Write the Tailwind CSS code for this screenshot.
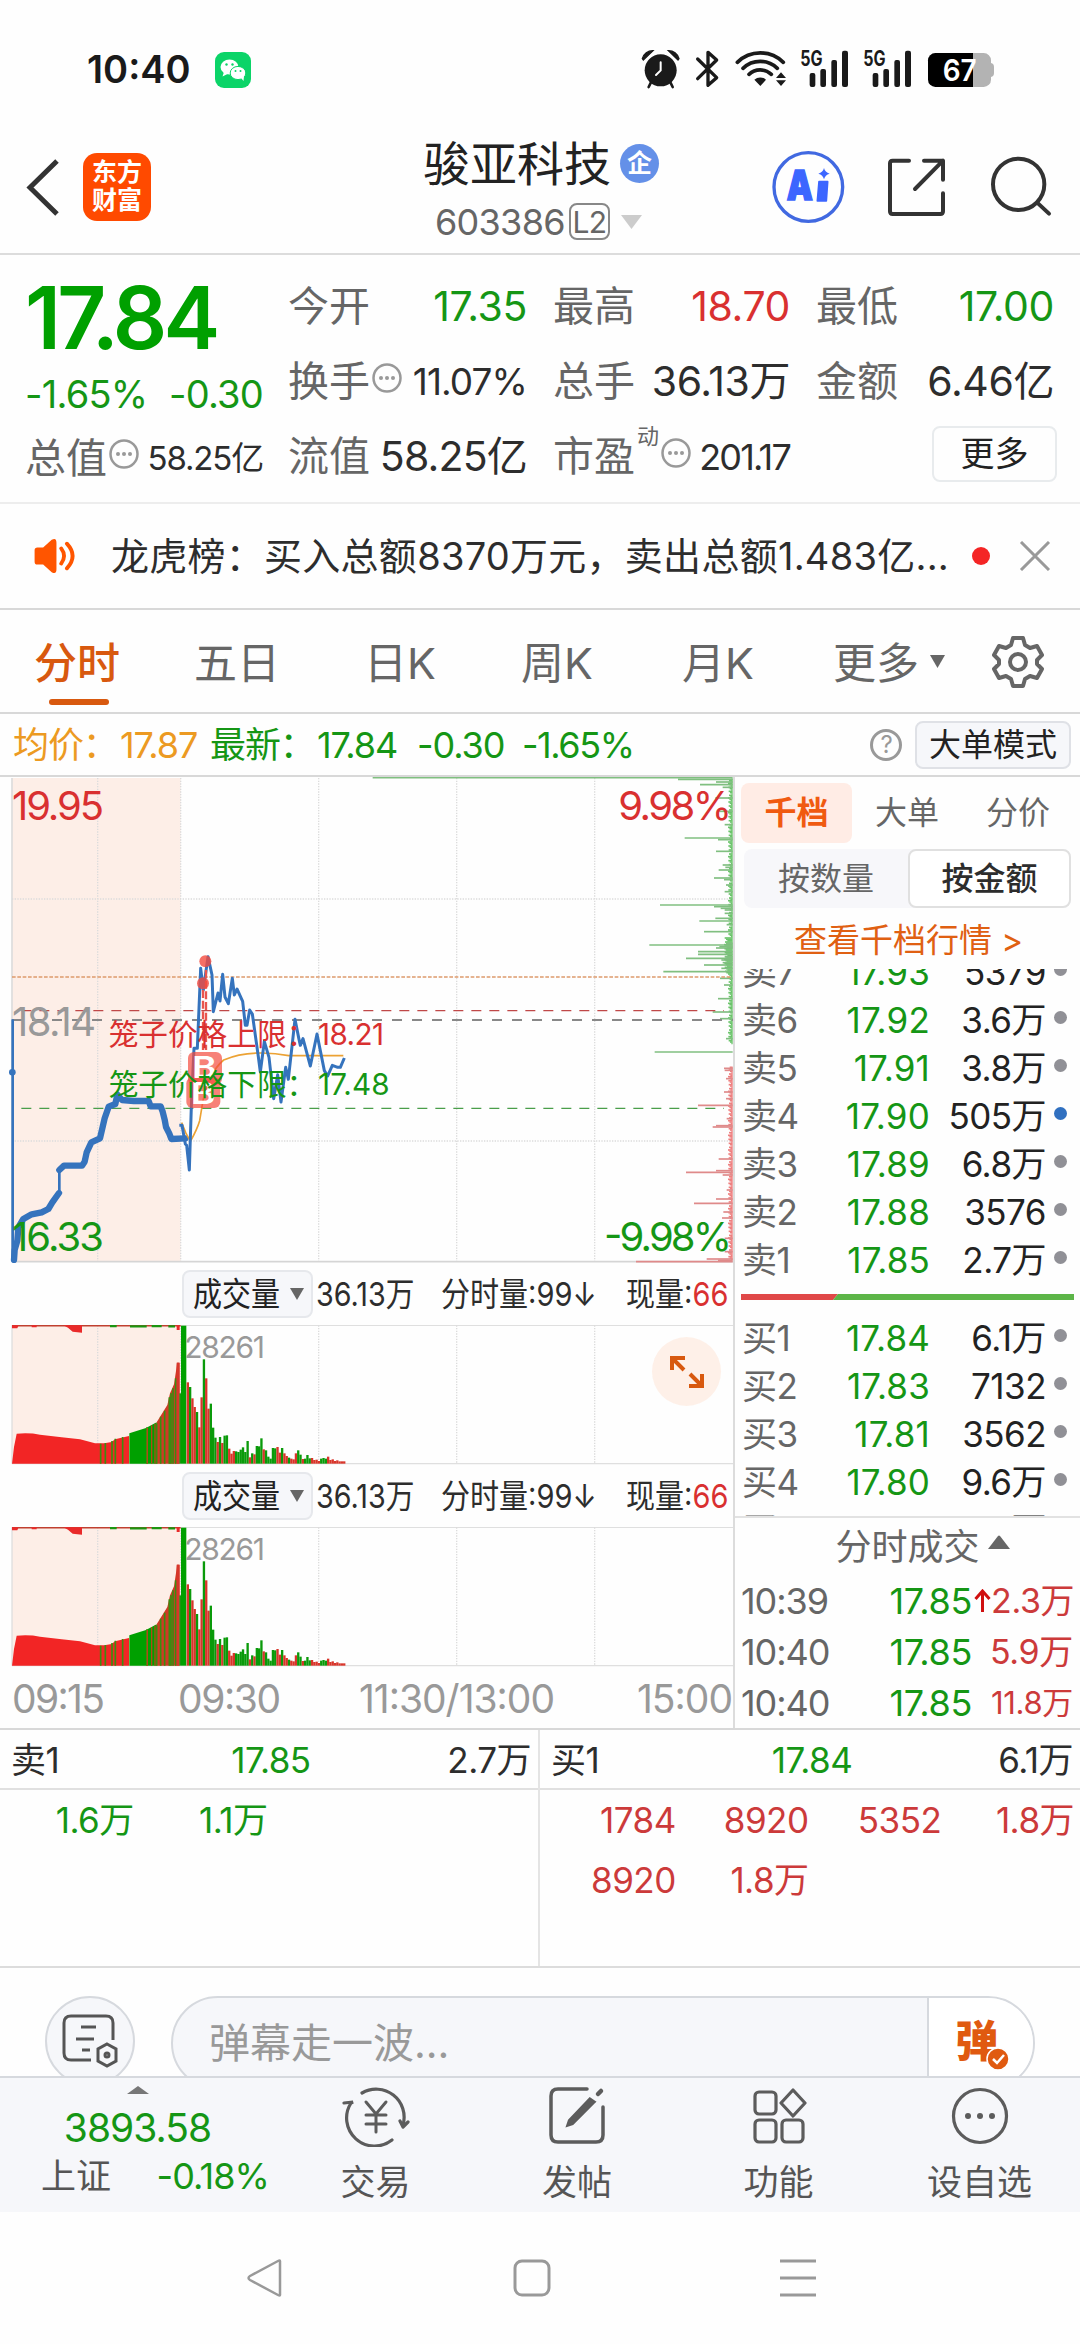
<!DOCTYPE html>
<html lang="zh-CN">
  <head>
    <meta charset="UTF-8" />
    <meta name="viewport" content="width=device-width, initial-scale=1.0" />
    <title>骏亚科技 603386</title>
    <script src="https://cdn.jsdelivr.net/npm/@tailwindcss/browser@4"></script>
    <style>
      body {
        font-family: 'Inter', 'Noto Sans CJK SC', sans-serif;
      }
    </style>
  </head>
  <body class="w-[1080px] h-[2344px] overflow-hidden bg-[#fefefe] text-[#2d2d2d] leading-none whitespace-nowrap">

    <!-- status bar -->
    <div class="h-[138px] pt-[49px] pl-[87px] flex items-start">
      <span class="w-[128px] h-10 flex items-center text-[38px] font-semibold text-[#1a1a1a] tracking-normal">10:40</span>
      <svg class="mt-[3px]" width="36" height="36" viewBox="0 0 36 36">
        <rect width="36" height="36" rx="9" fill="#0bd468" />
        <ellipse cx="14.5" cy="15" rx="9" ry="7.6" fill="#fff" />
        <path d="M9 20l-1.500 4.500 5-2.500z" fill="#fff" />
        <ellipse cx="23" cy="21" rx="7.800" ry="6.600" fill="#fff" stroke="#0bd468" stroke-width="1" />
        <path d="M26 26l2.500 3 .5-5z" fill="#fff" />
        <g fill="#0bd468"><circle cx="11.500" cy="12.500" r="1.200" /><circle cx="17.500" cy="12.500" r="1.200" /><circle cx="20.500" cy="19" r="1" /><circle cx="25.500" cy="19" r="1" /></g>
      </svg>
      <svg class="ml-[369px] -mt-[19px]" width="460" height="80" viewBox="0 0 1380 240" fill="#1a1a1a">
        <g>
          <circle cx="122" cy="121" r="48" />
          <path d="M67 86a32 32 0 0 1 32-24L70 90zM177 86a32 32 0 0 0-32-24l29 28z" stroke="#1a1a1a" stroke-width="4" />
          <path d="M94 155l-8 16M150 155l8 16" stroke="#1a1a1a" stroke-width="8" stroke-linecap="round" />
          <path d="M122 97v24l-14 14" fill="none" stroke="#fff" stroke-width="6" stroke-linecap="round" />
        </g>
        <path d="M233 87l57 56-26 23V67l26 23-57 56" fill="none" stroke="#1a1a1a" stroke-width="10" stroke-linecap="round" stroke-linejoin="round" />
        <g fill="none" stroke="#1a1a1a" stroke-width="11" stroke-linecap="round">
          <path d="M352 97a98 98 0 0 1 138 0M369 115a74 74 0 0 1 103 0M387 133a49 49 0 0 1 67 0" />
        </g>
        <path d="M403 149a26 26 0 0 1 35 0l-17 19zM468 144l15-17 15 17zM468 151l15 17 15-17z" />
        <text x="541" y="107" font-size="63" font-weight="700" textLength="67" lengthAdjust="spacingAndGlyphs">5G</text>
        <g><rect x="569" y="129" width="17" height="42" rx="6" /><rect x="601" y="117" width="17" height="54" rx="6" /><rect x="634" y="90" width="17" height="81" rx="6" /><rect x="666" y="62" width="18" height="109" rx="6" /></g>
        <text x="730" y="107" font-size="63" font-weight="700" textLength="67" lengthAdjust="spacingAndGlyphs">5G</text>
        <g><rect x="758" y="129" width="17" height="42" rx="6" /><rect x="790" y="117" width="17" height="54" rx="6" /><rect x="823" y="90" width="17" height="81" rx="6" /><rect x="855" y="62" width="18" height="109" rx="6" /></g>
        <path d="M1059 69h32a22 22 0 0 1 22 22v8q9 2 9 12v18q0 10-9 12v8a22 22 0 0 1-22 22h-32z" fill="#b3b3b3" />
        <path d="M1059 69v102H946a22 22 0 0 1-22-22V91a22 22 0 0 1 22-22z" fill="#000" />
        <text x="968" y="154" font-size="90" font-weight="600" fill="#fff" textLength="102" lengthAdjust="spacingAndGlyphs">67</text>
      </svg>
    </div>

    <!-- header -->
    <header class="h-[117px] flex border-b-2 border-[#dcdcdc]">
      <svg class="ml-6 mt-5" width="40" height="60" viewBox="0 0 40 60" fill="none" stroke="#333" stroke-width="5"><path d="M33 3L6 29.500 33 56" /></svg>
      <div class="ml-[19px] mt-[15px] w-[68px] h-[68px] rounded-[14px] bg-[#ff4a00] text-white text-[25px] leading-[28px] font-bold text-center pt-[5px]">东方<br />财富</div>
      <div class="ml-[272px]">
        <div class="flex items-center h-[50px]">
          <span class="text-[47px] text-[#222]">骏亚科技</span>
          <span class="ml-[9px] w-[39px] h-[39px] rounded-full bg-[#6490e8] text-white text-[25px] font-bold flex items-center justify-center">企</span>
        </div>
        <div class="flex items-center mt-[15px] ml-3 text-[36px] text-[#666] tracking-[-0.02em]">
          <span class="w-[129px]">603386</span>
          <span class="ml-[5px] w-[41px] h-[37px] rounded-lg border-2 border-[#888] text-[30px] flex items-center justify-center">L2</span>
          <svg class="ml-[10px]" width="23" height="16" viewBox="0 0 23 16"><path d="M1 1h21L11.500 15z" fill="#ccc" /></svg>
        </div>
      </div>
      <svg class="ml-auto mt-3" width="310" height="76" viewBox="0 0 930 228" fill="none">
        <!-- ai assistant, share, search -->
        <circle cx="115" cy="111" r="103" stroke="#4169e1" stroke-width="10" />
        <text x="50" y="150" font-size="124" font-weight="900" fill="#3c66ff" stroke="#3c66ff" stroke-width="5" textLength="78" lengthAdjust="spacingAndGlyphs">A</text>
        <path d="M147 95h26l-4 58h-27z" fill="#3c66ff" stroke="#3c66ff" stroke-width="5" stroke-linejoin="round" />
        <path d="M162 54q3 13 17 17-14 4-17 17-3-13-17-17 14-4 17-17z" fill="#3c66ff" />
        <g stroke="#333" stroke-width="12" stroke-linecap="round" stroke-linejoin="round">
          <path d="M417 32h-49q-8 0-8 8v144q0 8 8 8h143q8 0 8-8v-54M462 32h57v57M519 32l-84 85" />
          <circle cx="746" cy="103" r="77" />
          <path d="M804 160l33 31" />
        </g>
      </svg>
    </header>

    <!-- quote -->
    <section class="h-[249px] border-b-2 border-[#ededed] flex text-[41px] text-[#666]">
      <div class="w-[263px] pl-[25px] shrink-0">
        <div class="mt-[20px] h-[86px] flex items-center text-[86px] font-semibold text-[#00a000] tracking-[-0.045em] origin-left scale-x-[.99]">17.84</div>
        <div class="mt-[13px] h-[40px] flex items-center justify-between text-[38px] text-[#159615] tracking-[-0.02em]"><span>-1.65%</span><span>-0.30</span></div>
        <div class="mt-[24px] h-[40px] flex items-center justify-between">
          <span class="flex items-center">总值<svg class="ml-[2px] -mt-2" width="30" height="30" viewBox="0 0 30 30" fill="#999"><circle cx="15" cy="15" r="13.500" fill="none" stroke="#999" stroke-width="2.500" /><circle cx="9" cy="15" r="2" /><circle cx="15" cy="15" r="2" /><circle cx="21" cy="15" r="2" /></svg></span>
          <span class="text-[33px] text-[#2d2d2d] tracking-[-0.035em]">58.25亿</span>
        </div>
      </div>
      <div class="mt-[14px] ml-[25px] grid grid-cols-[239px_237px_238px] grid-rows-[75px_75px_75px] gap-x-[26px] [&>div]:flex [&>div]:items-center [&>div]:justify-between h-[225px]">
        <div>今开<span class="text-[#159615] tracking-[-0.01em]">17.35</span></div>
        <div>最高<span class="text-[#d93030] tracking-[-0.01em]">18.70</span></div>
        <div>最低<span class="text-[#159615] tracking-[-0.01em]">17.00</span></div>
        <div>
          <span class="flex items-center">换手<svg class="ml-[2px] -mt-2" width="30" height="30" viewBox="0 0 30 30" fill="#999"><circle cx="15" cy="15" r="13.500" fill="none" stroke="#999" stroke-width="2.500" /><circle cx="9" cy="15" r="2" /><circle cx="15" cy="15" r="2" /><circle cx="21" cy="15" r="2" /></svg></span>
          <span class="text-[37px] text-[#2d2d2d] tracking-[-0.025em]">11.07%</span>
        </div>
        <div>总手<span class="text-[#2d2d2d] tracking-[-0.01em]">36.13万</span></div>
        <div>金额<span class="text-[#2d2d2d] tracking-[-0.01em]">6.46亿</span></div>
        <div>流值<span class="text-[#2d2d2d] tracking-[-0.02em]">58.25亿</span></div>
        <div>
          <span class="flex items-center">市盈<sup class="text-[22px] -mt-5 ml-[2px]">动</sup><svg class="ml-[2px] -mt-2" width="30" height="30" viewBox="0 0 30 30" fill="#999"><circle cx="15" cy="15" r="13.500" fill="none" stroke="#999" stroke-width="2.500" /><circle cx="9" cy="15" r="2" /><circle cx="15" cy="15" r="2" /><circle cx="21" cy="15" r="2" /></svg></span>
          <span class="text-[36px] text-[#2d2d2d] tracking-[-0.05em]">201.17</span>
        </div>
        <div><span class="ml-auto -mr-[3px] -mt-[5px] w-[125px] h-[56px] rounded-lg border-2 border-[#e8ebed] text-[34px] text-[#222] flex items-center justify-center">更多</span></div>
      </div>
    </section>

    <!-- news ticker -->
    <section class="h-[106px] border-b-2 border-[#d8d8d8] flex items-center">
      <svg class="ml-[32px]" width="47" height="38" viewBox="0 0 48 40">
        <path d="M2 14q0-3 3-3h6L20 3q5-3 5 3v28q0 6-5 3l-9-8H5q-3 0-3-3z" fill="#ff5500" />
        <path d="M30 12q6 8 0 16M36 7q12 13 0 26" fill="none" stroke="#ff5500" stroke-width="4" stroke-linecap="round" />
      </svg>
      <span class="ml-[32px] w-[850px] text-[38px] text-[#2d2d2d] tracking-[0.007em]">龙虎榜：买入总额8370万元，卖出总额1.483亿...</span>
      <span class="ml-[11px] w-[18px] h-[18px] rounded-full bg-[#f42525]"></span>
      <svg class="ml-[29px]" width="32" height="30" viewBox="0 0 32 30" stroke="#999" stroke-width="3"><path d="M2 1l28 28M30 1L2 29" /></svg>
    </section>

    <!-- period tabs -->
    <nav class="h-[104px] border-b-2 border-[#d8d8d8] flex text-[43px] text-[#666] pt-[32px] pl-[34px]">
      <div class="w-[160px] text-[#d8590f] font-medium">分时<div class="mt-[14px] ml-[15px] w-[60px] h-[6px] rounded-full bg-[#d8590f]"></div></div>
      <div class="w-[170px]">五日</div>
      <div class="w-[157px]">日K</div>
      <div class="w-[161px]">周K</div>
      <div class="w-[151px]">月K</div>
      <div class="w-[159px] flex items-start">更多<svg class="ml-[10px] mt-[12px]" width="17" height="15" viewBox="0 0 17 15"><path d="M1 1h15L8.500 14z" fill="#666" /></svg></div>
      <svg class="-mt-[7px]" width="52" height="54" viewBox="0 0 52 54" fill="none" stroke="#666" stroke-width="4" stroke-linejoin="round">
        <path d="M21 3h10l2 7 5 3 7-2 5 9-5 5v4l5 5-5 9-7-2-5 3-2 7H21l-2-7-5-3-7 2-5-9 5-5v-4l-5-5 5-9 7 2 5-3z" />
        <circle cx="26" cy="27" r="8" />
      </svg>
    </nav>

    <!-- price summary -->
    <div class="h-[63px] border-b-2 border-[#d8d8d8] flex items-center text-[36px] tracking-[-0.03em] text-[#159615]">
      <span class="ml-[13px] w-[107px] text-[#ec9a22]">均价：</span>
      <span class="w-[90px] text-[#ec9a22]">17.87</span>
      <span class="w-[107px]">最新：</span>
      <span class="w-[100px]">17.84</span>
      <span class="w-[105px]">-0.30</span>
      <span class="tracking-[-0.04em]">-1.65%</span>
      <span class="ml-auto w-[32px] h-[32px] rounded-full border-[3px] border-[#999] text-[24px] text-[#999] flex items-center justify-center">?</span>
      <span class="ml-[13px] mr-[9px] w-[156px] h-[48px] rounded-lg border-2 border-[#dfe1e6] bg-[#f6f7fa] text-[32px] text-[#222] tracking-normal flex items-center justify-center">大单模式</span>
    </div>

    <div class="h-[953px] flex border-b-2 border-[#d8d8d8]">
      <!-- charts -->
      <div class="w-[735px] border-r-2 border-[#dcdcdc]">
        <svg class="block" width="733" height="486" viewBox="0 21 2199 1458" fill="none">
          <rect x="36" y="24" width="506" height="1450" fill="#fdeee7" />
          <path d="M36 24v1450" stroke="#dcdcdc" stroke-width="5" />
          <g stroke="#dcdcdc" stroke-width="4" stroke-dasharray="4 4">
            <path d="M293 24v1450M542 24v1450M956 24v1450M1370 24v1450M1784 24v1450M36 387h2163M36 1113h2163" />
          </g>
          <path d="M36 1475h2163" stroke="#d5d5d5" stroke-width="5" />
          <g id="depth" stroke-width="5"></g>
          <path d="M36 621h2155" stroke="#dd9a6c" stroke-width="5" stroke-dasharray="11 5" />
          <path d="M64 722h2108" stroke="#c04848" stroke-width="4" stroke-dasharray="30 24" />
          <path d="M36 750h2163" stroke="#888" stroke-width="6" stroke-dasharray="30 30" />
          <path d="M64 1015h2108" stroke="#4a9e4a" stroke-width="4" stroke-dasharray="30 24" />
          <text x="36" y="797" font-size="120" fill="#999" textLength="252">18.14</text>
          <path d="M38 748V1470" stroke="#3573bd" stroke-width="8" />
          <circle cx="37" cy="907" r="10" fill="#3573bd" />
          <path d="M42 1470l2-30 8-28 3-40 15-25 25-14 30-6 20-10 12-20 20-28M178 1200l14-13h54l8-12 6-28 14-30 26-12 6-26 8-34 12-35 20-8 6-28 14 16 36 3h44l6 16h30l6 16 6 24 4 22 10 20 6 16 42-2" stroke="#3573bd" stroke-width="19" stroke-linejoin="round" stroke-linecap="round" />
          <path d="M178 1265V1200" stroke="#3573bd" stroke-width="8" />
          <path d="M545 1058l12 30 14 26q20-35 28-62l10-60q18-85 62-122 50-22 115-21 40 0 80 8h164" stroke="#eca234" stroke-width="5" />
          <path d="M538 1066h8l10 56 4 4 8 74 6-190 8-175h10l10-240 8 65 14-100 12 55 4 110 14-56 6 24 8-80 7 68 10 20 12-76 6 50 8-18 17 37 8 72h5l8-46 8 12 18 128 6 46 12-92 14 48 8 70 6 54 12-72 10 82 14-104 8 36 20-180 12 60 4 18 8-20 22 82 20-96 22 110 10 16 14-32 16 6h8l12-28" stroke="#3573bd" stroke-width="9" stroke-linejoin="round" />
          <path d="M609 660v180M618 600v240" stroke="#e8554e" stroke-width="7" stroke-dasharray="24 8" />
          <g fill="#f44b3f" fill-opacity=".8">
            <circle cx="616" cy="574" r="18" /><circle cx="609" cy="640" r="18" />
            <rect x="564" y="846" width="102" height="98" rx="18" fill-opacity=".7" />
            <rect x="559" y="922" width="102" height="92" rx="18" fill-opacity=".7" />
          </g>
          <text x="576" y="925" font-size="88" font-weight="600" fill="#fff" textLength="74" lengthAdjust="spacingAndGlyphs">B</text>
          <text x="572" y="1002" font-size="88" font-weight="600" fill="#fff" textLength="74" lengthAdjust="spacingAndGlyphs">B</text>
          <g font-size="89">
            <text x="326" y="825" fill="#d93030">笼子价格上限：</text>
            <text x="954" y="825" fill="#d93030" textLength="198">18.21</text>
            <text x="326" y="975" fill="#159615">笼子价格下限：</text>
            <text x="954" y="975" fill="#159615" textLength="215">17.48</text>
          </g>
          <g font-size="120">
            <text x="36" y="149" fill="#d93030" textLength="276">19.95</text>
            <text x="36" y="1444" fill="#159615" textLength="276">16.33</text>
            <text x="1855" y="149" fill="#d93030" textLength="341">9.98%</text>
            <text x="1812" y="1444" fill="#159615" textLength="384">-9.98%</text>
          </g>
        </svg>

        <div class="h-[62px] flex items-center pl-[182px] text-[33px]">
          <span class="shrink-0 w-[131px] h-[48px] rounded-lg border-2 border-[#e6e8ec] bg-[#f6f7fa] flex items-center pl-[9px] text-[#222]"><span class="w-[87px] origin-left scale-x-[.88]">成交量</span><svg class="ml-[9px]" width="16" height="14" viewBox="0 0 16 14"><path d="M1 1h14L8 13z" fill="#666" /></svg></span>
          <span class="shrink-0 ml-[3px] w-[125px] origin-left scale-x-[.87]">36.13万</span>
          <span class="shrink-0 w-[185px] origin-left scale-x-[.88]">分时量:99↓</span>
          <span class="shrink-0 w-[100px] origin-left scale-x-[.88]">现量:<span class="text-[#d93030]">66</span></span>
        </div>
        <div class="h-[140px] relative">
          <svg class="block" width="733" height="140" viewBox="0 45 2199 420" fill="none">
            <g id="volume">
              <rect x="36" y="46" width="506" height="415" fill="#fdeee7" />
              <path d="M36 46h2163M36 461h2163M36 46v415" stroke="#dfdfdf" stroke-width="4" />
              <path d="M293 46v415M542 46v415M956 46v415M1370 46v415M1784 46v415" stroke="#dcdcdc" stroke-width="4" stroke-dasharray="4 4" />
              <path d="M36 461l6-50 8-40q40-3 70 3l65 8 55 6 45 12h28l22-4 10-8 42-10V461z" fill="#f22525" />
              <path d="M388 461v-91l50-16 32-17V461z" fill="#00a000" />
              <path d="M470 461V337l32-52 8-35 12-27 6-40 3-25h8V461z" fill="#d03a26" />
              <path d="M302 461v-60M316 461v-62M336 461v-68M346 461v-75M368 461v-80M441 461V352M470 461V340M482 461V320M494 461V302M508 461V262M513 461V250M519 461V235M527 461V205" stroke="#3c8c10" stroke-width="5" />
              <path d="M442 461V354M455 461V346M465 461V341" stroke="#b04a18" stroke-width="4" />
              <path d="M36 47h506" stroke="#c04030" stroke-width="5" />
              <path d="M36 46h20l-4 9H36zM190 46h56v22l-28-3-14-12zM530 46h9v14h-9zM95 46h15v6H95z" fill="#e92a2a" />
              <path d="M330 48h20M390 49h50M455 48h30M505 49h20" stroke="#1a9510" stroke-width="7" />
              <g class="bars"></g>
            </g>
            <text x="553" y="145" font-size="90" fill="#999" textLength="242">28261</text>
          </svg>
          <div class="absolute left-[652px] top-[12px] w-[69px] h-[69px] rounded-full bg-[#feeee5]/90 flex items-center justify-center">
            <svg width="36" height="36" viewBox="0 0 36 36" fill="none" stroke="#d8590f" stroke-width="4"><path d="M3 16V4h13M3 4l12 12M33 20v12H20M33 32L21 20" /></svg>
          </div>
        </div>
        <div class="h-[62px] flex items-center pl-[182px] text-[33px]">
          <span class="shrink-0 w-[131px] h-[48px] rounded-lg border-2 border-[#e6e8ec] bg-[#f6f7fa] flex items-center pl-[9px] text-[#222]"><span class="w-[87px] origin-left scale-x-[.88]">成交量</span><svg class="ml-[9px]" width="16" height="14" viewBox="0 0 16 14"><path d="M1 1h14L8 13z" fill="#666" /></svg></span>
          <span class="shrink-0 ml-[3px] w-[125px] origin-left scale-x-[.87]">36.13万</span>
          <span class="shrink-0 w-[185px] origin-left scale-x-[.88]">分时量:99↓</span>
          <span class="shrink-0 w-[100px] origin-left scale-x-[.88]">现量:<span class="text-[#d93030]">66</span></span>
        </div>
        <svg class="block" width="733" height="140" viewBox="0 45 2199 420" fill="none">
          <use href="#volume" />
          <text x="553" y="145" font-size="90" fill="#999" textLength="242">28261</text>
        </svg>
        <svg class="block" width="733" height="60" viewBox="0 0 733 60" font-size="39" fill="#999">
          <text x="12" y="46" textLength="93">09:15</text>
          <text x="178" y="46" textLength="103">09:30</text>
          <text x="359" y="46" textLength="196">11:30/13:00</text>
          <text x="637" y="46" textLength="96">15:00</text>
        </svg>
      </div>

      <!-- order book -->
      <aside class="w-[345px]">
        <div class="flex items-center pt-[6px] pl-[6px] text-[32px] text-[#666]">
          <span class="w-[111px] h-[60px] rounded-lg bg-[#ffece5] text-[#f05a10] font-bold flex items-center justify-center">千档</span>
          <span class="w-[110px] text-center">大单</span>
          <span class="w-[112px] text-center">分价</span>
        </div>
        <div class="mt-[6px] ml-[9px] w-[327px] h-[59px] rounded-lg bg-[#f7f7fa] flex text-[32px] text-[#666]">
          <span class="w-[164px] flex items-center justify-center">按数量</span>
          <span class="w-[163px] rounded-lg border-2 border-[#e0e0e0] bg-white text-[#2d2d2d] font-medium flex items-center justify-center">按金额</span>
        </div>
        <div class="h-[61px] flex items-center justify-center text-[33px] text-[#e06012] pt-1 pl-[2px]">查看千档行情 &gt;</div>
        <div id="asks" class="h-[315px] overflow-hidden flex flex-col justify-end"></div>
        <svg class="block mt-[10px] ml-[6px]" width="333" height="6" viewBox="0 0 333 6"><path d="M0 0h97l-5 6H0z" fill="#e04848" /><path d="M97 0h236v6H92z" fill="#5cb548" /></svg>
        <div id="bids" class="mt-[14px] h-[204px] overflow-hidden border-b-2 border-[#e2e2e2]"></div>
        <div class="h-[57px] flex items-center justify-center pl-[30px] text-[36px] text-[#666]">分时成交<svg class="ml-[8px] -mt-2" width="22" height="15" viewBox="0 0 22 15"><path d="M0 14L10 1q1-1 2 0l10 13z" fill="#666" /></svg></div>
        <div class="pl-[6px] text-[36px] tracking-[-0.03em] text-[#666]">
          <div class="h-[51px] flex items-center"><span class="w-[110px]">10:39</span><span class="w-[121px] text-right text-[#159615] tracking-[-0.01em]">17.85</span><svg class="ml-[2px]" width="17" height="24" viewBox="0 0 17 24" fill="none" stroke="#d01010" stroke-width="3"><path d="M8.500 23V3M1.500 10l7-8 7 8" /></svg><span class="w-[82px] text-right text-[34px] text-[#cc3a3a] tracking-[-0.01em]">2.3万</span></div>
          <div class="h-[51px] flex items-center"><span class="w-[110px]">10:40</span><span class="w-[121px] text-right text-[#159615] tracking-[-0.01em]">17.85</span><span class="w-[101px] text-right text-[34px] text-[#cc3a3a] tracking-[-0.01em]">5.9万</span></div>
          <div class="h-[51px] flex items-center"><span class="w-[110px]">10:40</span><span class="w-[121px] text-right text-[#159615] tracking-[-0.01em]">17.85</span><span class="w-[101px] text-right text-[31px] text-[#cc3a3a] tracking-[-0.01em]">11.8万</span></div>
        </div>
      </aside>
    </div>

    <!-- level 2 queues -->
    <section class="h-[238px] border-b-2 border-[#dcdcdc] grid grid-cols-2 text-[35px] tracking-[-0.015em]">
      <div class="border-r-2 border-[#e4e4e4]">
        <div class="h-[60px] border-b-2 border-[#e0e0e0] pt-[2px] pl-[11px] pr-[7px] grid grid-cols-[1fr_1fr_1fr] items-center"><span>卖1</span><span class="text-center text-[#159615]">17.85</span><span class="text-right">2.7万</span></div>
        <div class="h-[60px] grid grid-cols-4 items-center text-right text-[#159615] pr-[3px]"><span>1.6万</span><span>1.1万</span></div>
      </div>
      <div>
        <div class="h-[60px] border-b-2 border-[#e0e0e0] pt-[2px] pl-[11px] pr-[7px] grid grid-cols-[1fr_1fr_1fr] items-center"><span>买1</span><span class="text-center text-[#159615]">17.84</span><span class="text-right">6.1万</span></div>
        <div class="grid grid-cols-4 auto-rows-[60px] items-center text-right text-[#cc3a3a] pl-[3px] pr-[6px]"><span>1784</span><span>8920</span><span>5352</span><span>1.8万</span><span>8920</span><span>1.8万</span></div>
      </div>
    </section>

    <!-- comment bar, cut off by the bottom toolbar -->
    <section class="h-[108px] overflow-hidden pt-[28px] pl-[45px] flex">
      <div class="shrink-0 w-[90px] h-[90px] rounded-full border-2 border-[#d6d9de] bg-[#f6f7fa] flex items-center justify-center">
        <svg width="56" height="54" viewBox="0 0 56 54" fill="none" stroke="#555" stroke-width="3">
          <path d="M29 46H9q-7 0-7-7V9q0-7 7-7h35q7 0 7 7v17" />
          <path d="M19 13h15M14 25h18M20 36h8" />
          <path d="M45 30l9 5v12l-9 5-9-5V35z" fill="#f6f7fa" /><circle cx="45" cy="41" r="2" />
        </svg>
      </div>
      <div class="shrink-0 ml-[36px] w-[864px] h-[94px] rounded-full border-2 border-[#d6d9de] bg-[#f6f7fa] overflow-hidden flex">
        <span class="w-[756px] h-[90px] pl-[36px] text-[41px] text-[#999] flex items-center">弹幕走一波...</span>
        <span class="relative w-[106px] h-[94px] border-l-2 border-[#d6d9de] bg-white pl-[26px] pt-[22px] text-[43px] font-black text-[#e05a10]">弹
          <svg class="absolute left-[57px] top-[49px]" width="24" height="24" viewBox="0 0 24 24"><circle cx="12" cy="12" r="11" fill="#e05a10" stroke="#fff" stroke-width="1.500" /><path d="M7 12l4 4 7-8" fill="none" stroke="#fff" stroke-width="2.500" /></svg>
        </span>
      </div>
    </section>

    <!-- bottom toolbar -->
    <nav class="h-[136px] border-t-2 border-[#d6d9de] bg-[#f6f7fa] flex text-[35px] text-[#555]">
      <div class="w-[275px] flex flex-col items-center">
        <svg class="mt-[8px]" width="22" height="8" viewBox="0 0 22 8"><path d="M0 8L11 0l11 8z" fill="#777" /></svg>
        <span class="mt-[13px] h-[40px] flex items-center text-[39px] text-[#159615] tracking-[-0.025em]">3893.58</span>
        <span class="mt-[11px] ml-[41px] self-start w-[228px] flex items-center justify-between">上证<span class="text-[36px] text-[#159615] tracking-[-0.025em]">-0.18%</span></span>
      </div>
      <div class="w-[201px] flex flex-col items-center pt-[7px]">
        <svg width="68" height="62" viewBox="0 0 68 62" fill="none" stroke="#5c5c5c" stroke-width="3.200" stroke-linecap="round">
          <path d="M20 8a28 28 0 0 1 41 32M2 18l9-1-2 1a28 28 0 0 0 41 37M61 42l5-5M61 42l-3-6" />
          <path d="M24 17l10 12 10-12M34 29v18M24 30h20M24 39h20" stroke-width="3" />
        </svg>
        <span class="mt-[18px]">交易</span>
      </div>
      <div class="w-[202px] flex flex-col items-center pt-[7px]">
        <svg width="60" height="62" viewBox="0 0 60 62" fill="none" stroke="#5c5c5c" stroke-width="3.500" stroke-linecap="round">
          <path d="M40 4H11q-7 0-7 7v39q0 7 7 7h38q7 0 7-7V22" />
          <path d="M46 17L25 38l-3 1 1-3 20-21zM51 9l3-3" fill="#5c5c5c" stroke-width="4.500" />
        </svg>
        <span class="mt-[18px]">发帖</span>
      </div>
      <div class="w-[201px] flex flex-col items-center pt-[7px]">
        <svg width="56" height="62" viewBox="0 0 56 62" fill="none" stroke="#5c5c5c" stroke-width="3.200" stroke-linejoin="round">
          <rect x="4" y="7" width="21" height="22" rx="4" /><rect x="4" y="35" width="21" height="22" rx="4" /><rect x="31" y="35" width="21" height="22" rx="4" /><path d="M42 5l12 13-12 13-12-13z" />
        </svg>
        <span class="mt-[18px]">功能</span>
      </div>
      <div class="w-[201px] flex flex-col items-center pt-[7px]">
        <svg width="60" height="62" viewBox="0 0 60 62" fill="#5c5c5c"><circle cx="30" cy="31" r="26.500" fill="none" stroke="#5c5c5c" stroke-width="3.200" /><circle cx="18" cy="31" r="3" /><circle cx="30" cy="31" r="3" /><circle cx="42" cy="31" r="3" /></svg>
        <span class="mt-[18px]">设自选</span>
      </div>
    </nav>

    <!-- system navigation -->
    <div class="h-[132px] flex items-center pl-[246px] gap-[229px]">
      <svg width="38" height="38" viewBox="0 0 38 38" fill="none" stroke="#999" stroke-width="2.500" stroke-linejoin="round"><path d="M34 2v34q0 1-2 0L4 21q-3-2 0-4L32 2q2-1 2 0z" /></svg>
      <svg width="38" height="38" viewBox="0 0 38 38" fill="none" stroke="#999" stroke-width="3"><rect x="2" y="2" width="34" height="34" rx="7" /></svg>
      <svg width="38" height="38" viewBox="0 0 38 38" fill="none" stroke="#999" stroke-width="3"><path d="M0 2h36M0 19h36M0 36h36" /></svg>
    </div>

    <script>
      // label, price, amount
      const asks = [
        ["卖7", "17.93", "5379"], ["卖6", "17.92", "3.6万"], ["卖5", "17.91", "3.8万"], ["卖4", "17.90", "505万"],
        ["卖3", "17.89", "6.8万"], ["卖2", "17.88", "3576"], ["卖1", "17.85", "2.7万"],
      ];
      const bids = [["买1", "17.84", "6.1万"], ["买2", "17.83", "7132"], ["买3", "17.81", "3562"], ["买4", "17.80", "9.6万"], ["买5", "17.79", "11.1万"]];

      const row = ([label, price, amount]) => `
        <div class="shrink-0 h-[48px] flex items-center text-[35px] tracking-[-0.015em] pl-[7px]">
          <span class="w-[70px] text-[#666]">${label}</span>
          <span class="w-[118px] text-right text-[#159615] tracking-[0.005em]">${price}</span>
          <span class="w-[116px] text-right text-[#222]">${amount}</span>
          <span class="ml-[8px] -mt-[6px] w-[13px] h-[13px] rounded-full ${amount === "505万" ? "bg-[#3070c0]" : "bg-[#909096]"}"></span>
        </div>`;
      document.getElementById("asks").innerHTML = asks.map(row).join("");
      document.getElementById("bids").innerHTML = bids.map(row).join("");

      // volume bars: color and top edge, one per minute
      const volume = "r217 g231 r265 r291 g306 r352 r262 g148 r205 r296 g281 g353 g383 r396 g381 r399 g377 g376 r416 r431 r423 g424 g426 g419 g412 g426 g393 r442 g430 r433 g408 g409 g385 r418 g421 g440 g446 g414 g415 r411 r428 g414 r430 r438 g443 r446 r448 r430 g421 g434 r447 g446 g435 g445 r444 r450 r449 r453 g446 g444 g446 r440 r450 r448 r453 r451 r454 r454 r454".split(" ");
      let bars = '<rect x="543" y="47" width="16" height="414" fill="#00a000"/><rect x="530" y="158" width="8" height="303" fill="#d8352a"/><rect x="538" y="250" width="5" height="211" fill="#1a9510"/>';
      volume.forEach((v, i) => {
        const top = +v.slice(1);
        bars += `<rect x="${560 + i * 6.9}" y="${top}" width="7" height="${461 - top}" fill="${v[0] === "r" ? "#d8352a" : "#0a9a0a"}"/>`;
      });
      document.querySelector(".bars").innerHTML = bars;

      // resting orders by price: [y, length]
      const sells = [[23, 1080], [28, 164], [36, 50], [44, 98], [52, 30], [84, 52], [124, 44], [164, 24], [204, 144], [209, 44], [244, 50], [285, 30], [292, 22], [300, 42], [324, 56], [329, 26], [345, 20], [365, 24], [405, 218], [410, 56], [415, 36], [420, 24], [430, 24], [445, 52], [453, 100], [464, 18], [485, 86], [520, 20], [525, 250], [530, 40], [534, 50], [545, 104], [553, 104], [560, 24], [565, 140], [570, 34], [578, 30], [585, 86], [595, 34], [605, 208], [625, 38], [645, 26], [686, 44], [726, 60], [746, 38], [806, 20], [846, 234]];
      const buys = [[895, 26], [901, 24], [926, 20], [966, 26], [986, 20], [1006, 104], [1046, 18], [1067, 50], [1071, 60], [1167, 42], [1202, 50], [1207, 140], [1215, 30], [1260, 18], [1287, 50], [1300, 116], [1326, 28], [1344, 32], [1405, 24], [1445, 24], [1467, 78], [1471, 44], [1475, 290]];
      const bar = ([y, n], c) => `<path d="M${2198 - n} ${y}H2198" stroke="${c}"/>`;
      let depth = "";
      for (let y = 28, k = 0; y < 1470; y += 4, k++) {
        if (y > 820 && y < 890) continue;
        const n = 4 + ((k * 7) % 11) + (y > 500 && y < 610 ? 12 : 0);
        depth += bar([y, n], y < 850 ? "#6cc46c" : "#ee8080");
      }
      depth += sells.map((s) => bar(s, "#80bf80")).join("") + buys.map((s) => bar(s, "#df8a8a")).join("");
      document.getElementById("depth").innerHTML = depth;
    </script>
  </body>
</html>
